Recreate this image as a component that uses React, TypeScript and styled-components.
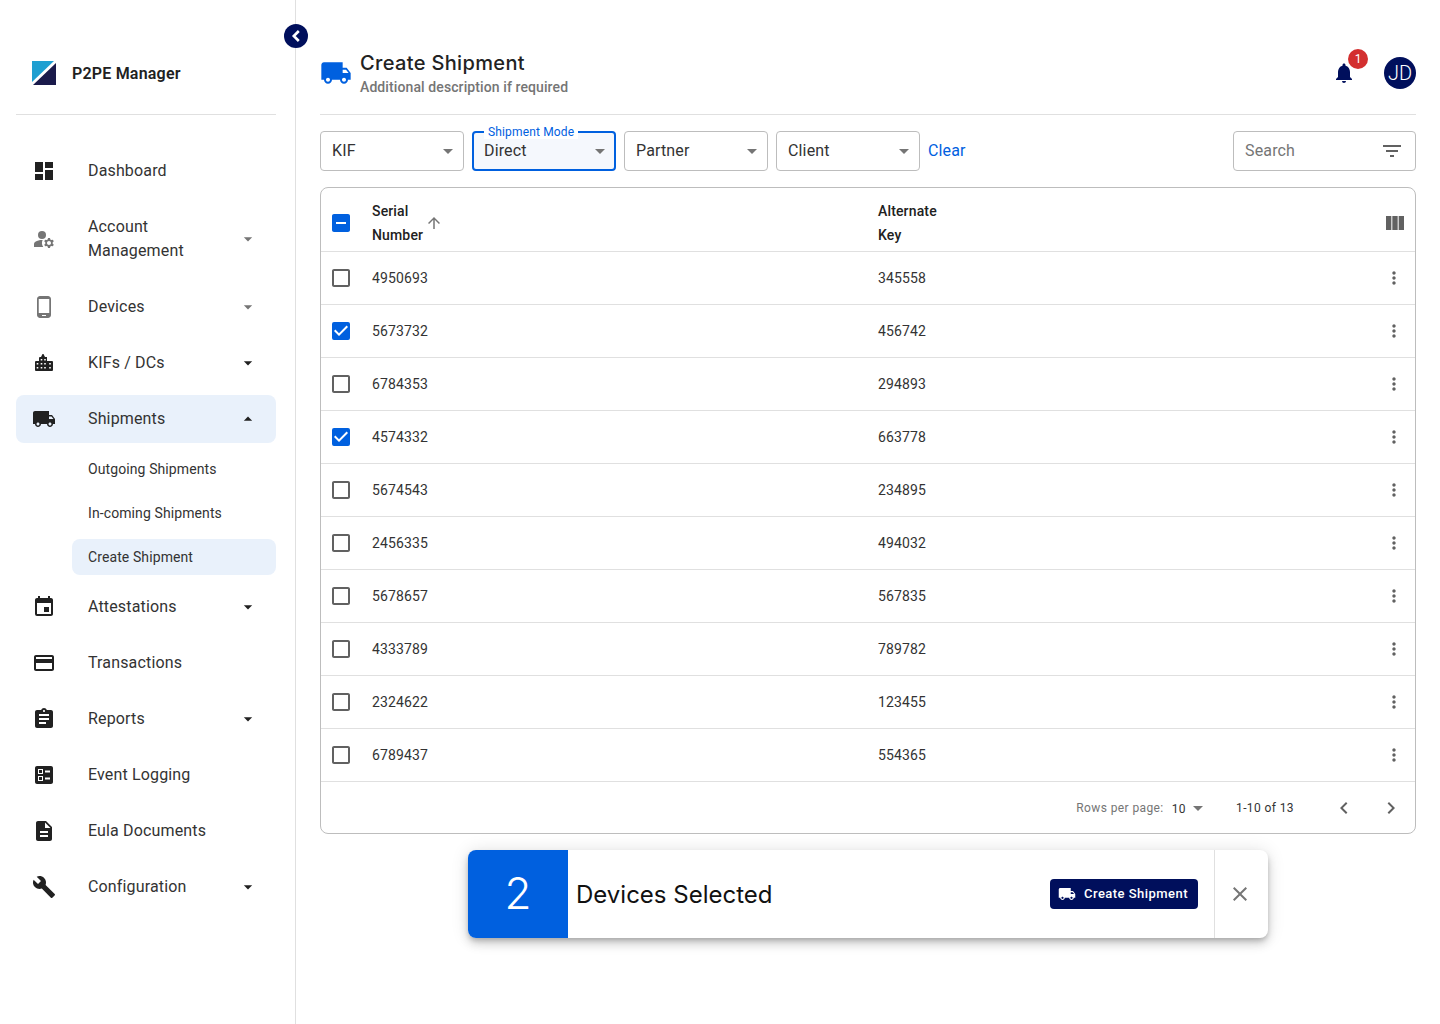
import React from "react";
import styled, { createGlobalStyle } from "styled-components";
import {
  MdDashboard, MdManageAccounts, MdPhoneAndroid, MdLocalShipping, MdEvent, MdCreditCard,
  MdAssignment, MdBallot, MdDescription, MdBuild, MdArrowDropDown, MdArrowDropUp, MdChevronLeft, MdChevronRight,
  MdNotifications, MdFilterList, MdArrowUpward, MdViewColumn, MdMoreVert, MdCheckBox, MdCheckBoxOutlineBlank,
  MdIndeterminateCheckBox, MdClose,
} from "react-icons/md";

const BLUE = "#0060df";
const NAVY = "#000f5c";
const HEAD = `"Inter", "Open Sans", sans-serif`;

const Global = createGlobalStyle`
  html, body { margin: 0; padding: 0; background: #fff; }
  body { font-family: "Roboto", sans-serif; color: rgba(0,0,0,.87); }
  * { box-sizing: border-box; }
`;
const Page = styled.div`
  position: relative; display: flex; width: 1440px; height: 1024px; overflow: hidden;
`;
const Sidebar = styled.aside`
  width: 296px; flex: none; border-right: 1px solid #e0e0e0; padding: 32px 19px 0 16px;
`;
const Brand = styled.div`
  height: 83px; display: flex; align-items: center; gap: 16px; padding: 0 16px; border-bottom: 1px solid #e0e0e0;
  font-size: 16px; font-weight: 600; letter-spacing: .2px; color: #212121;
`;
const Nav = styled.nav`
  display: flex; flex-direction: column; gap: 8px; margin-top: 32px;
`;
const NavItem = styled.div<{ $active?: boolean }>`
  display: flex; align-items: center; min-height: 48px; padding: 12px 16px; border-radius: 8px;
  background: ${(p) => (p.$active ? "#e9f1fb" : "transparent")};
`;
const NavIcon = styled.span<{ $muted?: boolean }>`
  width: 56px; flex: none; display: flex; align-items: center; font-size: 24px; color: ${(p) => (p.$muted ? "#757575" : "#212121")};
  svg { display: block; }
`;
const NavLabel = styled.span`
  flex: 1; font-size: 16px; line-height: 24px; letter-spacing: .15px; color: #333;
`;
const NavArrow = styled.span<{ $muted?: boolean }>`
  display: flex; width: 24px; justify-content: center; font-size: 20px; color: ${(p) => (p.$muted ? "#757575" : "#212121")};
`;
const SubItem = styled.div<{ $active?: boolean }>`
  margin-left: 56px; height: 36px; display: flex; align-items: center; padding: 0 16px; border-radius: 8px;
  font-size: 14px; letter-spacing: .1px; color: #333; background: ${(p) => (p.$active ? "#e9f1fb" : "transparent")};
`;
const Collapse = styled.button`
  position: absolute; left: 284px; top: 24px; width: 24px; height: 24px; padding: 0; border: 0; border-radius: 50%;
  background: ${NAVY}; color: #fff; display: flex; align-items: center; justify-content: center;
`;
const Main = styled.main`
  flex: 1; min-width: 0; padding: 32px 24px 0;
`;
const Header = styled.header`
  height: 83px; display: flex; align-items: flex-start; border-bottom: 1px solid #e0e0e0; padding-top: 16px;
`;
const HeaderIcon = styled.span`
  display: flex; font-size: 32px; color: ${BLUE}; width: 40px; margin-top: 9px;
`;
const Titles = styled.div`
  flex: 1;
`;
const Title = styled.h1`
  margin: 0; font-family: ${HEAD}; font-size: 20px; line-height: 30px; font-weight: 500; letter-spacing: .35px; color: #222;
`;
const Subtitle = styled.div`
  font-size: 14px; line-height: 18px; font-weight: 500; letter-spacing: .1px; color: #757575;
`;
const Actions = styled.div`
  display: flex; align-items: center; gap: 28px; margin-top: 9px;
`;
const BellWrap = styled.span`
  position: relative; display: flex; width: 24px; font-size: 24px; color: ${NAVY};
`;
const Badge = styled.span`
  position: absolute; left: 16px; top: -12px; width: 20px; height: 20px; border-radius: 50%; background: #d32f2f; color: #fff;
  font-size: 12px; display: flex; align-items: center; justify-content: center;
`;
const Avatar = styled.span`
  width: 32px; height: 32px; border-radius: 50%; background: ${NAVY}; color: #fff; font-size: 20px; font-weight: 300;
  display: flex; align-items: center; justify-content: center;
`;
const Filters = styled.div`
  display: flex; align-items: center; gap: 8px; margin-top: 16px; height: 40px;
`;
const Field = styled.div<{ $focus?: boolean }>`
  position: relative; width: 144px; height: 40px; display: flex; align-items: center; justify-content: space-between;
  padding: 0 ${(p) => (p.$focus ? 2 : 3)}px 2px ${(p) => (p.$focus ? 10 : 11)}px; border-radius: 4px;
  border: ${(p) => (p.$focus ? `2px solid ${BLUE}` : "1px solid #bdbdbd")};
  background: ${(p) => (p.$focus ? "#f5f8fd" : "#fff")};
  font-size: 16px; letter-spacing: .15px; color: #333;
  svg { color: #757575; font-size: 24px; margin-top: 2px; }
`;
const FloatLabel = styled.span`
  position: absolute; left: 10px; top: -8px; padding: 0 4px; background: #fff; color: ${BLUE};
  font-size: 12px; line-height: 14px; letter-spacing: .15px;
`;
const ClearLink = styled.a`
  font-size: 16px; letter-spacing: .15px; color: ${BLUE}; flex: 1; padding-bottom: 2px;
`;
const SearchBox = styled.div`
  width: 183px; height: 40px; border: 1px solid #bdbdbd; border-radius: 4px; display: flex; align-items: center; justify-content: space-between;
  padding: 0 11px 2px 11px; font-size: 16px; letter-spacing: .15px; color: #757575;
  svg { font-size: 24px; color: #616161; margin-top: 2px; }
`;
const Table = styled.section`
  margin-top: 16px; border: 1px solid #bdbdbd; border-radius: 8px; height: 647px; display: flex; flex-direction: column;
`;
const Row = styled.div<{ $head?: boolean }>`
  display: grid; grid-template-columns: 51px 506px 1fr 42px; align-items: center; flex: none;
  height: ${(p) => (p.$head ? 64 : 53)}px; padding-top: ${(p) => (p.$head ? 6 : 0)}px;
  border-bottom: 1px solid #e0e0e0; font-size: 14px; letter-spacing: .15px; color: #333;
`;
const CheckCell = styled.span<{ $on?: boolean }>`
  display: flex; padding-left: 8px; font-size: 24px; color: ${(p) => (p.$on ? BLUE : "#616161")};
`;
const HeadCell = styled.div`
  display: flex; align-items: center; font-weight: 500; line-height: 24px; color: #212121;
`;
const SortIcon = styled.span`
  display: flex; font-size: 18px; color: #757575; margin-left: 1px;
`;
const ColumnsIcon = styled.span`
  display: flex; justify-content: flex-end; padding-right: 8px; font-size: 24px; color: #616161;
`;
const MoreIcon = styled.span`
  display: flex; justify-content: flex-end; padding-right: 11px; font-size: 20px; color: #616161;
`;
const HeadLabel = styled.span`
  width: 52px;
`;
const Pager = styled.div`
  flex: 1; display: flex; align-items: center; justify-content: flex-end; font-size: 12px; letter-spacing: .4px; color: #333; padding-right: 12px;
`;
const PagerLabel = styled.span`
  color: #757575; margin-right: 8px;
`;
const PagerValue = styled.span`
  display: flex; align-items: center; margin-right: 26px; margin-top: 2px;
  svg { font-size: 24px; color: #757575; margin-top: -2px; }
`;
const PagerRange = styled.span`
  margin-right: 38px;
`;
const PagerButton = styled.span<{ $gap?: number }>`
  display: flex; font-size: 24px; color: #616161; margin-left: ${(p) => p.$gap ?? 0}px;
`;
const Popup = styled.div`
  margin: 16px 0 0 148px; width: 800px; height: 88px; display: flex; align-items: center; border-radius: 8px; background: #fff; overflow: hidden;
  box-shadow: 0 3px 5px -1px rgba(0,0,0,.2), 0 6px 10px rgba(0,0,0,.14), 0 1px 18px rgba(0,0,0,.12);
`;
const Count = styled.div`
  width: 100px; height: 100%; padding-bottom: 2px; background: ${BLUE}; color: #fff; display: flex; align-items: center; justify-content: center;
  font-family: ${HEAD}; font-size: 44px; font-weight: 300;
`;
const PopupText = styled.div`
  flex: 1; padding-left: 8px; font-family: ${HEAD}; font-size: 24px; color: #111;
`;
const PrimaryButton = styled.button`
  width: 148px; height: 30px; margin-right: 16px; border: 0; border-radius: 4px; background: ${NAVY}; color: #fff; display: flex; align-items: center; justify-content: center; gap: 8px;
  padding: 0 2px 1px 0; font-family: "Roboto", sans-serif; font-size: 13px; font-weight: 500; letter-spacing: .46px;
  svg { font-size: 18px; }
`;
const CloseCell = styled.div`
  width: 54px; height: 100%; border-left: 1px solid #e0e0e0; padding-right: 4px; display: flex; align-items: center; justify-content: center; font-size: 24px; color: #757575;
`;

const Logo = () => (
  <svg width="24" height="24" viewBox="0 0 24 24" aria-hidden>
    <path d="M0 0H22L0 21Z" fill="#1f9fd1" />
    <path d="M24 2V24H1Z" fill="#1a1a4b" />
  </svg>
);

const BackChevron = () => (
  <svg width="24" height="24" viewBox="0 0 24 24" fill="none" stroke="currentColor" strokeWidth="2.6" aria-hidden>
    <path d="M14.8 7 9.8 12l5 5" />
  </svg>
);

const Buildings = () => (
  <svg width="24" height="24" viewBox="0 0 24 24" fill="currentColor" aria-hidden>
    <path
      fillRule="evenodd"
      d="M10.5 3h1l1.5 3h2v4h5a1 1 0 0 1 1 1v8a1 1 0 0 1-1 1H4a1 1 0 0 1-1-1v-8a1 1 0 0 1 1-1h3V7a1 1 0 0 1 1-1h1ZM8.7 8v1.6h1.6V8Zm3.5 0v1.6h1.6V8ZM4.7 12v1.6h1.6V12Zm4 0v1.6h1.6V12Zm3.5 0v1.6h1.6V12Zm5 0v1.6h1.6V12ZM4.7 16v1.6h1.6V16Zm4 0v1.6h1.6V16Zm3.5 0v1.6h1.6V16Zm5 0v1.6h1.6V16Z"
    />
  </svg>
);

type Item = { label: React.ReactNode; icon: React.ReactNode; arrow?: "down" | "up"; muted?: boolean; active?: boolean };
const before: Item[] = [
  { label: "Dashboard", icon: <MdDashboard /> },
  { label: <>Account<br />Management</>, icon: <MdManageAccounts />, arrow: "down", muted: true },
  { label: "Devices", icon: <MdPhoneAndroid />, arrow: "down", muted: true },
  { label: "KIFs / DCs", icon: <Buildings />, arrow: "down" },
  { label: "Shipments", icon: <MdLocalShipping />, arrow: "up", active: true },
];
const after: Item[] = [
  { label: "Attestations", icon: <MdEvent />, arrow: "down" },
  { label: "Transactions", icon: <MdCreditCard /> },
  { label: "Reports", icon: <MdAssignment />, arrow: "down" },
  { label: "Event Logging", icon: <MdBallot /> },
  { label: "Eula Documents", icon: <MdDescription /> },
  { label: "Configuration", icon: <MdBuild />, arrow: "down" },
];
const rows: [string, string, boolean][] = [
  ["4950693", "345558", false], ["5673732", "456742", true], ["6784353", "294893", false], ["4574332", "663778", true],
  ["5674543", "234895", false], ["2456335", "494032", false], ["5678657", "567835", false], ["4333789", "789782", false],
  ["2324622", "123455", false], ["6789437", "554365", false],
];

const NavRow = ({ item }: { item: Item }) => (
  <NavItem $active={item.active}>
    <NavIcon $muted={item.muted}>{item.icon}</NavIcon>
    <NavLabel>{item.label}</NavLabel>
    {item.arrow && <NavArrow $muted={item.muted}>{item.arrow === "up" ? <MdArrowDropUp /> : <MdArrowDropDown />}</NavArrow>}
  </NavItem>
);

export default function App() {
  return (
    <Page>
      <Global />
      <Sidebar>
        <Brand><Logo />P2PE Manager</Brand>
        <Nav>
          {before.map((i, n) => <NavRow key={n} item={i} />)}
          <SubItem>Outgoing Shipments</SubItem>
          <SubItem>In-coming Shipments</SubItem>
          <SubItem $active>Create Shipment</SubItem>
          {after.map((i, n) => <NavRow key={n} item={i} />)}
        </Nav>
      </Sidebar>
      <Collapse aria-label="Collapse"><BackChevron /></Collapse>
      <Main>
        <Header>
          <HeaderIcon><MdLocalShipping /></HeaderIcon>
          <Titles>
            <Title>Create Shipment</Title>
            <Subtitle>Additional description if required</Subtitle>
          </Titles>
          <Actions>
            <BellWrap><MdNotifications /><Badge>1</Badge></BellWrap>
            <Avatar>JD</Avatar>
          </Actions>
        </Header>
        <Filters>
          <Field>KIF<MdArrowDropDown /></Field>
          <Field $focus><FloatLabel>Shipment Mode</FloatLabel>Direct<MdArrowDropDown /></Field>
          <Field>Partner<MdArrowDropDown /></Field>
          <Field>Client<MdArrowDropDown /></Field>
          <ClearLink>Clear</ClearLink>
          <SearchBox>Search<MdFilterList /></SearchBox>
        </Filters>
        <Table>
          <Row $head>
            <CheckCell $on><MdIndeterminateCheckBox /></CheckCell>
            <HeadCell><HeadLabel>Serial Number</HeadLabel><SortIcon><MdArrowUpward /></SortIcon></HeadCell>
            <HeadCell><HeadLabel>Alternate Key</HeadLabel></HeadCell>
            <ColumnsIcon><MdViewColumn /></ColumnsIcon>
          </Row>
          {rows.map(([a, b, on]) => (
            <Row key={a}>
              <CheckCell $on={on}>{on ? <MdCheckBox /> : <MdCheckBoxOutlineBlank />}</CheckCell>
              <span>{a}</span>
              <span>{b}</span>
              <MoreIcon><MdMoreVert /></MoreIcon>
            </Row>
          ))}
          <Pager>
            <PagerLabel>Rows per page:</PagerLabel>
            <PagerValue>10<MdArrowDropDown /></PagerValue>
            <PagerRange>1-10 of 13</PagerRange>
            <PagerButton><MdChevronLeft /></PagerButton>
            <PagerButton $gap={23}><MdChevronRight /></PagerButton>
          </Pager>
        </Table>
        <Popup>
          <Count>2</Count>
          <PopupText>Devices Selected</PopupText>
          <PrimaryButton><MdLocalShipping />Create Shipment</PrimaryButton>
          <CloseCell><MdClose /></CloseCell>
        </Popup>
      </Main>
    </Page>
  );
}
